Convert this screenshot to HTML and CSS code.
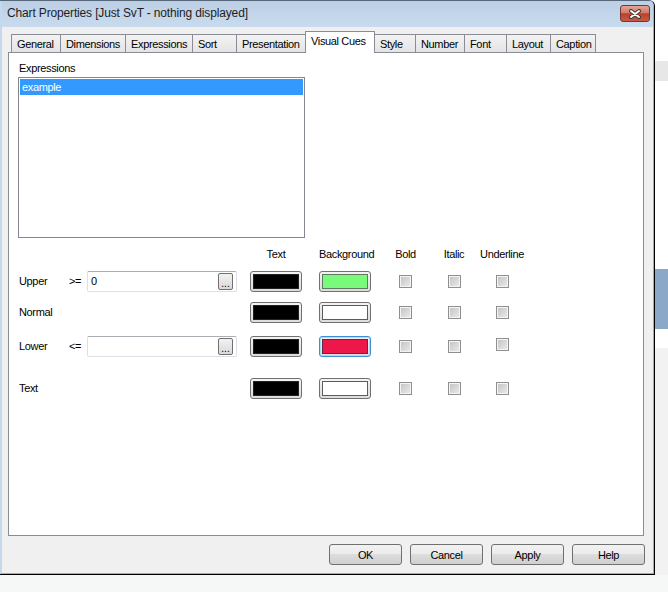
FILE: index.html
```html
<!DOCTYPE html>
<html lang="en">

<head>
    <meta charset="UTF-8">
    <title>Chart Properties</title>
    <link rel="stylesheet" href="styles.css">
</head>

<body>
    <div class="screen">
        <div class="window">
            <div class="frame">
                <div class="titlebar">
                    <span class="title">Chart Properties [Just SvT - nothing displayed]</span>
                    <button class="close-btn">
                        <svg width="14" height="10" viewBox="0 0 14 10">
                            <path d="M3 2 L11 8 M11 2 L3 8" stroke="#3b3b3b" stroke-width="4" stroke-linecap="round" />
                            <path d="M3 2 L11 8 M11 2 L3 8" stroke="#fff" stroke-width="2" stroke-linecap="round" />
                        </svg>
                    </button>
                </div>
                <div class="client">
                    <div class="tabs">
                        <div class="tab">General</div>
                        <div class="tab">Dimensions</div>
                        <div class="tab">Expressions</div>
                        <div class="tab">Sort</div>
                        <div class="tab">Presentation</div>
                        <div class="tab active">Visual Cues</div>
                        <div class="tab">Style</div>
                        <div class="tab">Number</div>
                        <div class="tab">Font</div>
                        <div class="tab">Layout</div>
                        <div class="tab last">Caption</div>
                    </div>
                    <div class="panel">
                        <div class="field-label">Expressions</div>
                        <div class="listbox">
                            <div class="list-item selected">example</div>
                        </div>
                        <div class="cues">
                            <div class="head blank"></div>
                            <div class="head col-swatch">Text</div>
                            <div class="head col-swatch">Background</div>
                            <div class="head col-check">Bold</div>
                            <div class="head col-check">Italic</div>
                            <div class="head col-check">Underline</div>

                            <div class="row-label">Upper</div>
                            <div class="row-op">&gt;=</div>
                            <div class="expr-input"><span>0</span><button class="dots">...</button></div>
                            <div class="color-btn"><span class="swatch black"></span></div>
                            <div class="color-btn"><span class="swatch green"></span></div>
                            <div class="check"></div>
                            <div class="check"></div>
                            <div class="check"></div>

                            <div class="row-label">Normal</div>
                            <div class="row-op"></div>
                            <div></div>
                            <div class="color-btn"><span class="swatch black"></span></div>
                            <div class="color-btn"><span class="swatch white"></span></div>
                            <div class="check"></div>
                            <div class="check"></div>
                            <div class="check"></div>

                            <div class="row-label">Lower</div>
                            <div class="row-op">&lt;=</div>
                            <div class="expr-input"><span></span><button class="dots">...</button></div>
                            <div class="color-btn"><span class="swatch black"></span></div>
                            <div class="color-btn focused"><span class="swatch red"></span></div>
                            <div class="check"></div>
                            <div class="check"></div>
                            <div class="check raised"></div>

                            <div class="row-label">Text</div>
                            <div class="row-op"></div>
                            <div></div>
                            <div class="color-btn"><span class="swatch black"></span></div>
                            <div class="color-btn"><span class="swatch white"></span></div>
                            <div class="check"></div>
                            <div class="check"></div>
                            <div class="check"></div>
                        </div>
                    </div>
                    <div class="actions">
                        <button class="btn">OK</button>
                        <button class="btn">Cancel</button>
                        <button class="btn">Apply</button>
                        <button class="btn">Help</button>
                    </div>
                </div>
            </div>
        </div>
        <div class="side">
            <div class="band white" style="height: 61px"></div>
            <div class="band grey" style="height: 20px"></div>
            <div class="band white" style="height: 188px"></div>
            <div class="band blue" style="height: 60px"></div>
            <div class="band white" style="height: 19px"></div>
            <div class="band light"></div>
        </div>
    </div>
</body>

</html>
```

FILE: styles.css
```css
* {
    margin: 0;
    padding: 0;
    box-sizing: border-box;
}

body {
    background-color: #f6f7f7;
    font-family: "Liberation Sans", Arial, sans-serif;
    font-size: 11px;
    letter-spacing: -0.35px;
    color: #000;
}

button {
    font-family: inherit;
    font-size: 11px;
    letter-spacing: inherit;
    color: #000;
}

.screen {
    display: flex;
    height: 575px;
}

/* window frame */
.window {
    width: 655px;
    height: 575px;
    border-top: 1px solid #56677a;
    border-right: 1px solid #000;
    border-bottom: 1px solid #000;
    border-top-right-radius: 6px;
    overflow: hidden;
    background: #c6d8ec;
}

.frame {
    height: 100%;
    display: flex;
    flex-direction: column;
    border-left: 2px solid #c6d8ec;
    border-right: 1px solid #58c6ec;
    border-bottom: 1px solid #58c6ec;
}

.titlebar {
    height: 26px;
    display: flex;
    justify-content: space-between;
    align-items: flex-start;
    padding-left: 5px;
    background: linear-gradient(#bccfe5, #c9dbee);
}

.title {
    font-size: 12px;
    letter-spacing: -0.15px;
    line-height: 24px;
    color: #1e1e1e;
}

.close-btn {
    width: 30px;
    height: 17px;
    margin: 4px 3px 0 0;
    border: 1px solid #6e3a33;
    border-radius: 3px;
    background: linear-gradient(#e6a494, #d27a66 45%, #b9412f 52%, #c85a44);
    display: flex;
    align-items: center;
    justify-content: center;
}

.client {
    flex: 1;
    background-color: #f0f0f0;
    padding: 4px 8px 0 6px;
}

/* tabs */
.tabs {
    display: flex;
    align-items: flex-end;
    height: 22px;
    margin: 0 0 -1px 3px;
    position: relative;
    z-index: 1;
}

.tab {
    height: 18px;
    margin-bottom: 1px;
    padding-left: 5px;
    line-height: 18px;
    white-space: nowrap;
    border-left: 1px solid #898c95;
    border-top: 1px solid #898c95;
    background: linear-gradient(#f3f3f3, #e4e4e4);
}

.tab:nth-child(1) { width: 49px; }
.tab:nth-child(2) { width: 65px; }
.tab:nth-child(3) { width: 67px; }
.tab:nth-child(4) { width: 44px; }
.tab:nth-child(5) { width: 69px; }
.tab:nth-child(6) { width: 70px; }
.tab:nth-child(7) { width: 40px; }
.tab:nth-child(8) { width: 49px; }
.tab:nth-child(9) { width: 42px; }
.tab:nth-child(10) { width: 44px; }
.tab:nth-child(11) { width: 46px; }

.tab.last {
    border-right: 1px solid #898c95;
}

.tab.active {
    height: 22px;
    margin-bottom: 0;
    line-height: 19px;
    background: #fff;
    border-right: 1px solid #898c95;
}

.tab.active + .tab {
    border-left: none;
}

/* panel */
.panel {
    width: 636px;
    height: 484px;
    border: 1px solid #898c95;
    background: #fff;
    padding: 8px 0 0 9px;
}

.field-label {
    line-height: 14px;
    margin-bottom: 2px;
    padding-left: 1px;
}

.listbox {
    width: 287px;
    height: 161px;
    border: 1px solid #828790;
    padding: 1px;
}

.list-item {
    height: 16px;
    line-height: 16px;
    padding-left: 2px;
}

.list-item.selected {
    background-color: #3399ff;
    color: #fff;
}

/* visual cues grid */
.cues {
    margin-top: 9px;
    display: grid;
    grid-template-columns: 50px 19px 163px 69px 62px 49px 48px 48px;
    grid-template-rows: 24px 31px 34px 42px 21px;
    align-items: start;
}

.head {
    line-height: 14px;
}

.head.blank {
    grid-column: 1 / 4;
}

.col-swatch {
    width: 52px;
    text-align: center;
}

.col-check {
    justify-self: center;
}

.row-label,
.row-op {
    height: 21px;
    line-height: 20px;
    padding-left: 1px;
}

.expr-input {
    width: 150px;
    height: 21px;
    display: flex;
    justify-content: space-between;
    align-items: flex-start;
    padding: 0 3px 0 3px;
    line-height: 19px;
    border: 1px solid #dbdfe6;
    border-top-color: #abadb3;
    border-radius: 2px;
    background: #fff;
}

.dots {
    width: 15px;
    height: 17px;
    margin-top: 1px;
    border: 1px solid #707070;
    border-radius: 2px;
    background: linear-gradient(#f2f2f2, #d9d9d9);
    line-height: 20px;
    font-size: 10px;
    letter-spacing: 0;
    overflow: hidden;
}

.color-btn {
    width: 52px;
    height: 21px;
    padding: 2px;
    border: 1px solid #707070;
    border-radius: 3px;
    background: linear-gradient(#f4f4f4, #dcdcdc);
}

.color-btn.focused {
    border-color: #3c8fd2;
    box-shadow: inset 0 0 0 1px #a8ddf8;
}

.swatch {
    display: block;
    height: 15px;
    border: 1px solid #5c5c5c;
}

.swatch.black { background: #000; border-color: #222; }
.swatch.white { background: #fff; }
.swatch.green { background: #7afa7a; border-color: #5f7a5f; }
.swatch.red { background: #ec184a; border-color: #6a2a3a; }

.check {
    justify-self: center;
    width: 13px;
    height: 13px;
    margin-top: 4px;
    border: 1px solid #8e8f8f;
    background: linear-gradient(135deg, #c2c2c2, #ececec);
    box-shadow: inset 0 0 0 1px #f4f4f4;
}

.check.raised {
    margin-top: 2px;
}

/* bottom buttons */
.actions {
    display: flex;
    justify-content: flex-end;
    gap: 8px;
    margin-top: 8px;
}

.btn {
    width: 73px;
    height: 21px;
    border: 1px solid #707070;
    border-radius: 3px;
    background: linear-gradient(#f2f2f2, #ebebeb 50%, #dddddd 50%, #cfcfcf);
}

/* area behind the dialog */
.side {
    flex: 1;
    display: flex;
    flex-direction: column;
}

.band.white { background: #fff; }
.band.grey { background: #e7e7e7; }
.band.blue { background: #8ba8c9; }
.band.light { flex: 1; background: #f2f2f2; }
```
